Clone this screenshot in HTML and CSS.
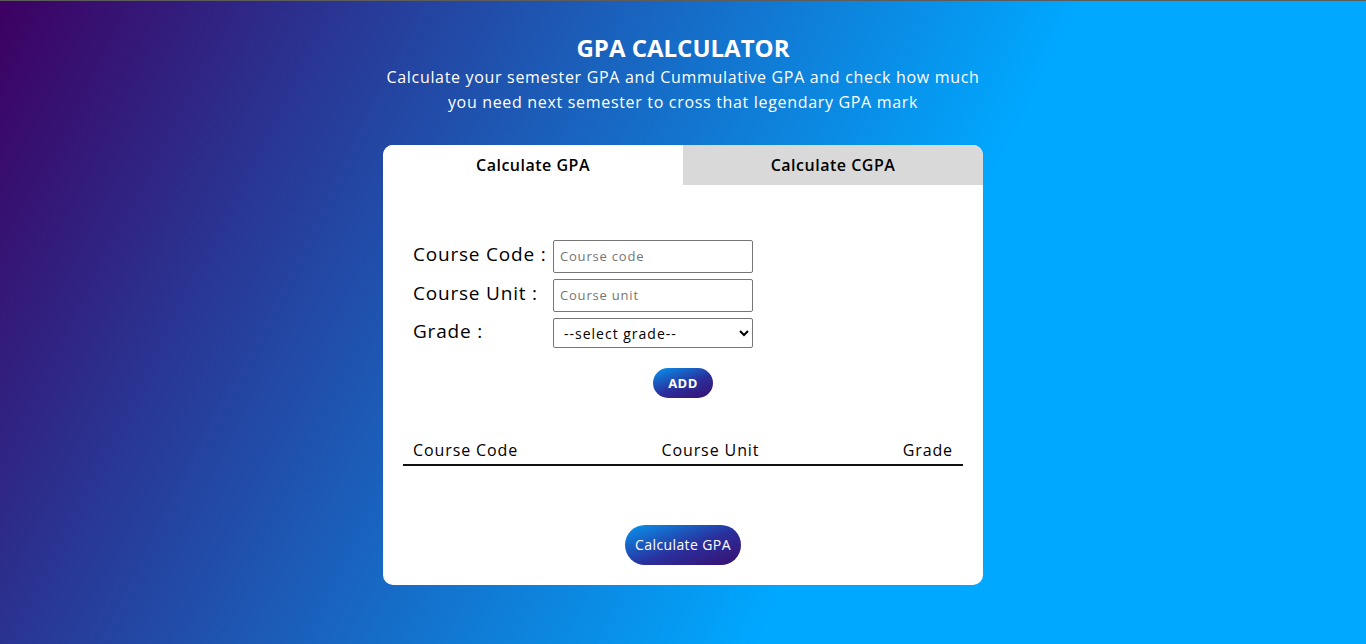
FILE: index.html
```html
<!DOCTYPE html>
<html lang="en">
<head>
<meta charset="utf-8">
<title>GPA Calculator</title>
<link rel="stylesheet" href="styles.css">
</head>
<body>
<div class="page">
  <header class="hero">
    <h1 class="title">GPA CALCULATOR</h1>
    <p class="subtitle">Calculate your semester GPA and Cummulative GPA and check how much you need next semester to cross that legendary GPA mark</p>
  </header>
  <main class="card">
    <div class="tabs">
      <div class="tab tab-active">Calculate GPA</div>
      <div class="tab">Calculate CGPA</div>
    </div>
    <div class="panel">
      <form class="form">
        <div class="row">
          <label class="label" for="code">Course Code :</label>
          <input class="field" id="code" type="text" placeholder="Course code">
        </div>
        <div class="row">
          <label class="label" for="unit">Course Unit :</label>
          <input class="field" id="unit" type="text" placeholder="Course unit">
        </div>
        <div class="row">
          <label class="label" for="grade">Grade :</label>
          <select class="field select" id="grade">
            <option>--select grade--</option>
            <option>A</option>
            <option>B</option>
            <option>C</option>
            <option>D</option>
            <option>E</option>
            <option>F</option>
          </select>
        </div>
        <div class="add-wrap">
          <button type="button" class="btn btn-add">ADD</button>
        </div>
      </form>
      <div class="table">
        <div class="thead">
          <span>Course Code</span>
          <span>Course Unit</span>
          <span>Grade</span>
        </div>
        <div class="tbody"></div>
      </div>
      <div class="calc-wrap">
        <button type="button" class="btn btn-calc">Calculate GPA</button>
      </div>
    </div>
  </main>
</div>
</body>
</html>
```

FILE: styles.css
```css
* { box-sizing: border-box; }

html, body {
  margin: 0;
  padding: 0;
}

body {
  min-height: 100vh;
  font-family: "Open Sans", "DejaVu Sans", sans-serif;
  background: linear-gradient(117deg, #3d0061 0%, #00a8ff 64%);
  border-top: 1px solid #5c5c5c;
  color: #000;
}

.page {
  display: flex;
  flex-direction: column;
  align-items: center;
  padding-top: 30px;
}

.hero {
  width: 600px;
  text-align: center;
  color: #fff;
}

.title {
  margin: 0;
  font-size: 24px;
  line-height: 33px;
  font-weight: 700;
}

.subtitle {
  margin: 0;
  padding-top: 1px;
  font-size: 16px;
  line-height: 25px;
  font-weight: 400;
  letter-spacing: 0.68px;
}

.card {
  margin-top: 30px;
  width: 600px;
  background: #fff;
  border-radius: 10px;
  overflow: hidden;
}

.tabs {
  display: flex;
  height: 40px;
}

.tab {
  flex: 1;
  display: flex;
  align-items: center;
  justify-content: center;
  font-size: 16px;
  font-weight: 600;
  letter-spacing: 0.5px;
  background: #d9d9d9;
}

.tab-active {
  background: #fff;
}

.panel {
  padding: 55px 20px 20px;
}

.form {
  display: flex;
  flex-direction: column;
  gap: 6px;
  padding-left: 10px;
}

.row {
  display: flex;
  align-items: center;
}

.label {
  width: 140px;
  font-size: 19px;
  letter-spacing: 0.8px;
  margin-top: -5px;
}

.field {
  width: 200px;
  height: 33px;
  border: 1px solid #767676;
  border-radius: 2px;
  padding: 0 6px 2px;
  font-family: inherit;
  font-size: 13px;
  letter-spacing: 0.8px;
  color: #000;
  background: #fff;
}

.field::placeholder {
  color: #757575;
}

.select {
  height: 30px;
  padding: 0 4px 0 6px;
  font-size: 14px;
  letter-spacing: 1px;
}

.add-wrap {
  display: flex;
  justify-content: center;
  margin-top: 14px;
  margin-left: -10px;
}

.btn {
  border: 0;
  color: #fff;
  font-family: inherit;
  background: linear-gradient(160deg, #0795ee 0%, #2a2f9c 55%, #3a0f70 100%);
  cursor: pointer;
}

.btn-add {
  width: 60px;
  height: 30px;
  border-radius: 15px;
  font-size: 13px;
  font-weight: 700;
  letter-spacing: 0.5px;
}

.table {
  margin-top: 41px;
}

.thead {
  display: flex;
  justify-content: space-between;
  padding: 0 10px 3px;
  font-size: 16px;
  font-weight: 500;
  letter-spacing: 0.9px;
  border-bottom: 2px solid #111;
}

.tbody {
  height: 59px;
}

.calc-wrap {
  display: flex;
  justify-content: center;
}

.btn-calc {
  width: 116px;
  height: 40px;
  border-radius: 20px;
  padding-bottom: 3px;
  font-size: 14px;
  font-weight: 400;
  letter-spacing: 0.4px;
}
```
